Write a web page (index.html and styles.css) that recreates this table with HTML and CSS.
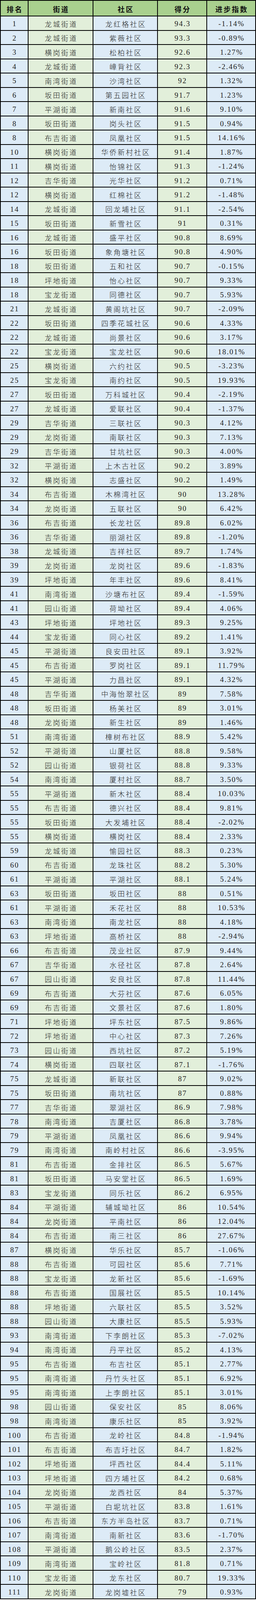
FILE: index.html
```html
<!DOCTYPE html>
<html lang="zh-CN">
<head>
<meta charset="utf-8">
<title>社区排名</title>
<link rel="stylesheet" href="styles.css">
</head>
<body>
<div class="table">
<div class="row head"><div class="c">排名</div><div class="c">街道</div><div class="c">社区</div><div class="c">得分</div><div class="c">进步指数</div></div>
<div class="row"><div class="c n b">1</div><div class="c t g">龙城街道</div><div class="c t b">龙红格社区</div><div class="c n g">94.3</div><div class="c n b">-1.14%</div></div>
<div class="row"><div class="c n b">2</div><div class="c t g">龙城街道</div><div class="c t b">紫薇社区</div><div class="c n g">93.3</div><div class="c n b">-0.89%</div></div>
<div class="row"><div class="c n b">3</div><div class="c t g">横岗街道</div><div class="c t b">松柏社区</div><div class="c n g">92.6</div><div class="c n b">1.27%</div></div>
<div class="row"><div class="c n b">4</div><div class="c t g">龙城街道</div><div class="c t b">嶂背社区</div><div class="c n g">92.3</div><div class="c n b">-2.46%</div></div>
<div class="row"><div class="c n b">5</div><div class="c t g">南湾街道</div><div class="c t b">沙湾社区</div><div class="c n g">92</div><div class="c n b">1.32%</div></div>
<div class="row"><div class="c n b">6</div><div class="c t g">坂田街道</div><div class="c t b">第五园社区</div><div class="c n g">91.7</div><div class="c n b">1.23%</div></div>
<div class="row"><div class="c n b">7</div><div class="c t g">平湖街道</div><div class="c t b">新南社区</div><div class="c n g">91.6</div><div class="c n b">9.10%</div></div>
<div class="row"><div class="c n b">8</div><div class="c t g">坂田街道</div><div class="c t b">岗头社区</div><div class="c n g">91.5</div><div class="c n b">0.94%</div></div>
<div class="row"><div class="c n b">8</div><div class="c t g">布吉街道</div><div class="c t b">凤凰社区</div><div class="c n g">91.5</div><div class="c n b">14.16%</div></div>
<div class="row"><div class="c n b">10</div><div class="c t g">横岗街道</div><div class="c t b">华侨新村社区</div><div class="c n g">91.4</div><div class="c n b">1.87%</div></div>
<div class="row"><div class="c n b">11</div><div class="c t g">横岗街道</div><div class="c t b">怡锦社区</div><div class="c n g">91.3</div><div class="c n b">-1.24%</div></div>
<div class="row"><div class="c n b">12</div><div class="c t g">吉华街道</div><div class="c t b">光华社区</div><div class="c n g">91.2</div><div class="c n b">0.71%</div></div>
<div class="row"><div class="c n b">12</div><div class="c t g">横岗街道</div><div class="c t b">红棉社区</div><div class="c n g">91.2</div><div class="c n b">-1.48%</div></div>
<div class="row"><div class="c n b">14</div><div class="c t g">龙城街道</div><div class="c t b">回龙埔社区</div><div class="c n g">91.1</div><div class="c n b">-2.54%</div></div>
<div class="row"><div class="c n b">15</div><div class="c t g">坂田街道</div><div class="c t b">新雪社区</div><div class="c n g">91</div><div class="c n b">0.31%</div></div>
<div class="row"><div class="c n b">16</div><div class="c t g">龙城街道</div><div class="c t b">盛平社区</div><div class="c n g">90.8</div><div class="c n b">8.69%</div></div>
<div class="row"><div class="c n b">16</div><div class="c t g">坂田街道</div><div class="c t b">象角塘社区</div><div class="c n g">90.8</div><div class="c n b">4.90%</div></div>
<div class="row"><div class="c n b">18</div><div class="c t g">坂田街道</div><div class="c t b">五和社区</div><div class="c n g">90.7</div><div class="c n b">-0.15%</div></div>
<div class="row"><div class="c n b">18</div><div class="c t g">坪地街道</div><div class="c t b">怡心社区</div><div class="c n g">90.7</div><div class="c n b">9.33%</div></div>
<div class="row"><div class="c n b">18</div><div class="c t g">宝龙街道</div><div class="c t b">同德社区</div><div class="c n g">90.7</div><div class="c n b">5.93%</div></div>
<div class="row"><div class="c n b">21</div><div class="c t g">龙城街道</div><div class="c t b">黄阁坑社区</div><div class="c n g">90.7</div><div class="c n b">-2.09%</div></div>
<div class="row"><div class="c n b">22</div><div class="c t g">坂田街道</div><div class="c t b">四季花城社区</div><div class="c n g">90.6</div><div class="c n b">4.33%</div></div>
<div class="row"><div class="c n b">22</div><div class="c t g">龙城街道</div><div class="c t b">尚景社区</div><div class="c n g">90.6</div><div class="c n b">3.17%</div></div>
<div class="row"><div class="c n b">22</div><div class="c t g">宝龙街道</div><div class="c t b">宝龙社区</div><div class="c n g">90.6</div><div class="c n b">18.01%</div></div>
<div class="row"><div class="c n b">25</div><div class="c t g">横岗街道</div><div class="c t b">六约社区</div><div class="c n g">90.5</div><div class="c n b">-3.23%</div></div>
<div class="row"><div class="c n b">25</div><div class="c t g">宝龙街道</div><div class="c t b">南约社区</div><div class="c n g">90.5</div><div class="c n b">19.93%</div></div>
<div class="row"><div class="c n b">27</div><div class="c t g">坂田街道</div><div class="c t b">万科城社区</div><div class="c n g">90.4</div><div class="c n b">-2.19%</div></div>
<div class="row"><div class="c n b">27</div><div class="c t g">龙城街道</div><div class="c t b">爱联社区</div><div class="c n g">90.4</div><div class="c n b">-1.37%</div></div>
<div class="row"><div class="c n b">29</div><div class="c t g">吉华街道</div><div class="c t b">三联社区</div><div class="c n g">90.3</div><div class="c n b">4.12%</div></div>
<div class="row"><div class="c n b">29</div><div class="c t g">龙岗街道</div><div class="c t b">南联社区</div><div class="c n g">90.3</div><div class="c n b">7.13%</div></div>
<div class="row"><div class="c n b">29</div><div class="c t g">吉华街道</div><div class="c t b">甘坑社区</div><div class="c n g">90.3</div><div class="c n b">4.00%</div></div>
<div class="row"><div class="c n b">32</div><div class="c t g">平湖街道</div><div class="c t b">上木古社区</div><div class="c n g">90.2</div><div class="c n b">3.89%</div></div>
<div class="row"><div class="c n b">32</div><div class="c t g">横岗街道</div><div class="c t b">志盛社区</div><div class="c n g">90.2</div><div class="c n b">1.49%</div></div>
<div class="row"><div class="c n b">34</div><div class="c t g">布吉街道</div><div class="c t b">木棉湾社区</div><div class="c n g">90</div><div class="c n b">13.28%</div></div>
<div class="row"><div class="c n b">34</div><div class="c t g">龙岗街道</div><div class="c t b">五联社区</div><div class="c n g">90</div><div class="c n b">6.42%</div></div>
<div class="row"><div class="c n b">36</div><div class="c t g">布吉街道</div><div class="c t b">长龙社区</div><div class="c n g">89.8</div><div class="c n b">6.02%</div></div>
<div class="row"><div class="c n b">36</div><div class="c t g">吉华街道</div><div class="c t b">丽湖社区</div><div class="c n g">89.8</div><div class="c n b">-1.20%</div></div>
<div class="row"><div class="c n b">38</div><div class="c t g">龙城街道</div><div class="c t b">吉祥社区</div><div class="c n g">89.7</div><div class="c n b">1.74%</div></div>
<div class="row"><div class="c n b">39</div><div class="c t g">龙岗街道</div><div class="c t b">龙岗社区</div><div class="c n g">89.6</div><div class="c n b">-1.83%</div></div>
<div class="row"><div class="c n b">39</div><div class="c t g">坪地街道</div><div class="c t b">年丰社区</div><div class="c n g">89.6</div><div class="c n b">8.41%</div></div>
<div class="row"><div class="c n b">41</div><div class="c t g">南湾街道</div><div class="c t b">沙塘布社区</div><div class="c n g">89.4</div><div class="c n b">-1.59%</div></div>
<div class="row"><div class="c n b">41</div><div class="c t g">园山街道</div><div class="c t b">荷坳社区</div><div class="c n g">89.4</div><div class="c n b">4.06%</div></div>
<div class="row"><div class="c n b">43</div><div class="c t g">坪地街道</div><div class="c t b">坪地社区</div><div class="c n g">89.3</div><div class="c n b">9.25%</div></div>
<div class="row"><div class="c n b">44</div><div class="c t g">宝龙街道</div><div class="c t b">同心社区</div><div class="c n g">89.2</div><div class="c n b">1.41%</div></div>
<div class="row"><div class="c n b">45</div><div class="c t g">平湖街道</div><div class="c t b">良安田社区</div><div class="c n g">89.1</div><div class="c n b">3.92%</div></div>
<div class="row"><div class="c n b">45</div><div class="c t g">布吉街道</div><div class="c t b">罗岗社区</div><div class="c n g">89.1</div><div class="c n b">11.79%</div></div>
<div class="row"><div class="c n b">45</div><div class="c t g">平湖街道</div><div class="c t b">力昌社区</div><div class="c n g">89.1</div><div class="c n b">4.32%</div></div>
<div class="row"><div class="c n b">48</div><div class="c t g">吉华街道</div><div class="c t b">中海怡翠社区</div><div class="c n g">89</div><div class="c n b">7.58%</div></div>
<div class="row"><div class="c n b">48</div><div class="c t g">坂田街道</div><div class="c t b">杨美社区</div><div class="c n g">89</div><div class="c n b">3.01%</div></div>
<div class="row"><div class="c n b">48</div><div class="c t g">龙岗街道</div><div class="c t b">新生社区</div><div class="c n g">89</div><div class="c n b">1.46%</div></div>
<div class="row"><div class="c n b">51</div><div class="c t g">南湾街道</div><div class="c t b">樟树布社区</div><div class="c n g">88.9</div><div class="c n b">5.42%</div></div>
<div class="row"><div class="c n b">52</div><div class="c t g">平湖街道</div><div class="c t b">山厦社区</div><div class="c n g">88.8</div><div class="c n b">9.58%</div></div>
<div class="row"><div class="c n b">52</div><div class="c t g">园山街道</div><div class="c t b">银荷社区</div><div class="c n g">88.8</div><div class="c n b">9.33%</div></div>
<div class="row"><div class="c n b">54</div><div class="c t g">南湾街道</div><div class="c t b">厦村社区</div><div class="c n g">88.7</div><div class="c n b">3.50%</div></div>
<div class="row"><div class="c n b">55</div><div class="c t g">平湖街道</div><div class="c t b">新木社区</div><div class="c n g">88.4</div><div class="c n b">10.03%</div></div>
<div class="row"><div class="c n b">55</div><div class="c t g">布吉街道</div><div class="c t b">德兴社区</div><div class="c n g">88.4</div><div class="c n b">9.81%</div></div>
<div class="row"><div class="c n b">55</div><div class="c t g">坂田街道</div><div class="c t b">大发埔社区</div><div class="c n g">88.4</div><div class="c n b">-2.02%</div></div>
<div class="row"><div class="c n b">55</div><div class="c t g">横岗街道</div><div class="c t b">横岗社区</div><div class="c n g">88.4</div><div class="c n b">2.33%</div></div>
<div class="row"><div class="c n b">59</div><div class="c t g">龙城街道</div><div class="c t b">愉园社区</div><div class="c n g">88.3</div><div class="c n b">0.23%</div></div>
<div class="row"><div class="c n b">60</div><div class="c t g">布吉街道</div><div class="c t b">龙珠社区</div><div class="c n g">88.2</div><div class="c n b">5.30%</div></div>
<div class="row"><div class="c n b">61</div><div class="c t g">平湖街道</div><div class="c t b">平湖社区</div><div class="c n g">88.1</div><div class="c n b">5.24%</div></div>
<div class="row"><div class="c n b">63</div><div class="c t g">坂田街道</div><div class="c t b">坂田社区</div><div class="c n g">88</div><div class="c n b">0.51%</div></div>
<div class="row"><div class="c n b">61</div><div class="c t g">平湖街道</div><div class="c t b">禾花社区</div><div class="c n g">88</div><div class="c n b">10.53%</div></div>
<div class="row"><div class="c n b">63</div><div class="c t g">南湾街道</div><div class="c t b">南龙社区</div><div class="c n g">88</div><div class="c n b">4.18%</div></div>
<div class="row"><div class="c n b">63</div><div class="c t g">坪地街道</div><div class="c t b">高桥社区</div><div class="c n g">88</div><div class="c n b">-2.94%</div></div>
<div class="row"><div class="c n b">66</div><div class="c t g">布吉街道</div><div class="c t b">茂业社区</div><div class="c n g">87.9</div><div class="c n b">9.44%</div></div>
<div class="row"><div class="c n b">67</div><div class="c t g">吉华街道</div><div class="c t b">水径社区</div><div class="c n g">87.8</div><div class="c n b">2.64%</div></div>
<div class="row"><div class="c n b">67</div><div class="c t g">园山街道</div><div class="c t b">安良社区</div><div class="c n g">87.8</div><div class="c n b">11.44%</div></div>
<div class="row"><div class="c n b">69</div><div class="c t g">布吉街道</div><div class="c t b">大芬社区</div><div class="c n g">87.6</div><div class="c n b">6.05%</div></div>
<div class="row"><div class="c n b">69</div><div class="c t g">布吉街道</div><div class="c t b">文景社区</div><div class="c n g">87.6</div><div class="c n b">1.80%</div></div>
<div class="row"><div class="c n b">71</div><div class="c t g">坪地街道</div><div class="c t b">坪东社区</div><div class="c n g">87.5</div><div class="c n b">9.86%</div></div>
<div class="row"><div class="c n b">72</div><div class="c t g">坪地街道</div><div class="c t b">中心社区</div><div class="c n g">87.3</div><div class="c n b">7.26%</div></div>
<div class="row"><div class="c n b">73</div><div class="c t g">园山街道</div><div class="c t b">西坑社区</div><div class="c n g">87.2</div><div class="c n b">5.19%</div></div>
<div class="row"><div class="c n b">74</div><div class="c t g">横岗街道</div><div class="c t b">四联社区</div><div class="c n g">87.1</div><div class="c n b">-1.76%</div></div>
<div class="row"><div class="c n b">75</div><div class="c t g">龙城街道</div><div class="c t b">新联社区</div><div class="c n g">87</div><div class="c n b">9.02%</div></div>
<div class="row"><div class="c n b">75</div><div class="c t g">坂田街道</div><div class="c t b">南坑社区</div><div class="c n g">87</div><div class="c n b">0.88%</div></div>
<div class="row"><div class="c n b">77</div><div class="c t g">吉华街道</div><div class="c t b">翠湖社区</div><div class="c n g">86.9</div><div class="c n b">7.98%</div></div>
<div class="row"><div class="c n b">78</div><div class="c t g">南湾街道</div><div class="c t b">吉厦社区</div><div class="c n g">86.8</div><div class="c n b">3.78%</div></div>
<div class="row"><div class="c n b">79</div><div class="c t g">平湖街道</div><div class="c t b">凤凰社区</div><div class="c n g">86.6</div><div class="c n b">9.94%</div></div>
<div class="row"><div class="c n b">79</div><div class="c t g">南湾街道</div><div class="c t b">南岭村社区</div><div class="c n g">86.6</div><div class="c n b">-3.95%</div></div>
<div class="row"><div class="c n b">81</div><div class="c t g">布吉街道</div><div class="c t b">金排社区</div><div class="c n g">86.5</div><div class="c n b">5.67%</div></div>
<div class="row"><div class="c n b">81</div><div class="c t g">坂田街道</div><div class="c t b">马安堂社区</div><div class="c n g">86.5</div><div class="c n b">1.69%</div></div>
<div class="row"><div class="c n b">83</div><div class="c t g">宝龙街道</div><div class="c t b">同乐社区</div><div class="c n g">86.2</div><div class="c n b">6.95%</div></div>
<div class="row"><div class="c n b">84</div><div class="c t g">平湖街道</div><div class="c t b">辅城坳社区</div><div class="c n g">86</div><div class="c n b">10.54%</div></div>
<div class="row"><div class="c n b">84</div><div class="c t g">龙岗街道</div><div class="c t b">平南社区</div><div class="c n g">86</div><div class="c n b">12.04%</div></div>
<div class="row"><div class="c n b">84</div><div class="c t g">布吉街道</div><div class="c t b">南三社区</div><div class="c n g">86</div><div class="c n b">27.67%</div></div>
<div class="row"><div class="c n b">87</div><div class="c t g">横岗街道</div><div class="c t b">华乐社区</div><div class="c n g">85.7</div><div class="c n b">-1.06%</div></div>
<div class="row"><div class="c n b">88</div><div class="c t g">布吉街道</div><div class="c t b">可园社区</div><div class="c n g">85.6</div><div class="c n b">7.71%</div></div>
<div class="row"><div class="c n b">88</div><div class="c t g">宝龙街道</div><div class="c t b">龙新社区</div><div class="c n g">85.6</div><div class="c n b">-1.69%</div></div>
<div class="row"><div class="c n b">88</div><div class="c t g">布吉街道</div><div class="c t b">国展社区</div><div class="c n g">85.5</div><div class="c n b">10.14%</div></div>
<div class="row"><div class="c n b">88</div><div class="c t g">坪地街道</div><div class="c t b">六联社区</div><div class="c n g">85.5</div><div class="c n b">3.52%</div></div>
<div class="row"><div class="c n b">88</div><div class="c t g">园山街道</div><div class="c t b">大康社区</div><div class="c n g">85.5</div><div class="c n b">5.93%</div></div>
<div class="row"><div class="c n b">93</div><div class="c t g">南湾街道</div><div class="c t b">下李朗社区</div><div class="c n g">85.3</div><div class="c n b">-7.02%</div></div>
<div class="row"><div class="c n b">94</div><div class="c t g">南湾街道</div><div class="c t b">丹平社区</div><div class="c n g">85.2</div><div class="c n b">4.13%</div></div>
<div class="row"><div class="c n b">95</div><div class="c t g">布吉街道</div><div class="c t b">布吉社区</div><div class="c n g">85.1</div><div class="c n b">2.77%</div></div>
<div class="row"><div class="c n b">95</div><div class="c t g">南湾街道</div><div class="c t b">丹竹头社区</div><div class="c n g">85.1</div><div class="c n b">6.92%</div></div>
<div class="row"><div class="c n b">95</div><div class="c t g">南湾街道</div><div class="c t b">上李朗社区</div><div class="c n g">85.1</div><div class="c n b">3.01%</div></div>
<div class="row"><div class="c n b">98</div><div class="c t g">园山街道</div><div class="c t b">保安社区</div><div class="c n g">85</div><div class="c n b">8.06%</div></div>
<div class="row"><div class="c n b">98</div><div class="c t g">南湾街道</div><div class="c t b">康乐社区</div><div class="c n g">85</div><div class="c n b">3.92%</div></div>
<div class="row"><div class="c n b">100</div><div class="c t g">布吉街道</div><div class="c t b">龙岭社区</div><div class="c n g">84.8</div><div class="c n b">-1.94%</div></div>
<div class="row"><div class="c n b">101</div><div class="c t g">布吉街道</div><div class="c t b">布吉圩社区</div><div class="c n g">84.7</div><div class="c n b">1.82%</div></div>
<div class="row"><div class="c n b">102</div><div class="c t g">坪地街道</div><div class="c t b">坪西社区</div><div class="c n g">84.4</div><div class="c n b">5.11%</div></div>
<div class="row"><div class="c n b">103</div><div class="c t g">坪地街道</div><div class="c t b">四方埔社区</div><div class="c n g">84.2</div><div class="c n b">0.68%</div></div>
<div class="row"><div class="c n b">104</div><div class="c t g">龙岗街道</div><div class="c t b">龙西社区</div><div class="c n g">84</div><div class="c n b">5.37%</div></div>
<div class="row"><div class="c n b">105</div><div class="c t g">平湖街道</div><div class="c t b">白坭坑社区</div><div class="c n g">83.8</div><div class="c n b">1.61%</div></div>
<div class="row"><div class="c n b">106</div><div class="c t g">布吉街道</div><div class="c t b">东方半岛社区</div><div class="c n g">83.7</div><div class="c n b">0.71%</div></div>
<div class="row"><div class="c n b">107</div><div class="c t g">南湾街道</div><div class="c t b">南新社区</div><div class="c n g">83.6</div><div class="c n b">-1.70%</div></div>
<div class="row"><div class="c n b">108</div><div class="c t g">平湖街道</div><div class="c t b">鹅公岭社区</div><div class="c n g">83.5</div><div class="c n b">2.37%</div></div>
<div class="row"><div class="c n b">109</div><div class="c t g">南湾街道</div><div class="c t b">宝岭社区</div><div class="c n g">81.8</div><div class="c n b">0.71%</div></div>
<div class="row"><div class="c n b">110</div><div class="c t g">宝龙街道</div><div class="c t b">龙东社区</div><div class="c n g">80.7</div><div class="c n b">19.33%</div></div>
<div class="row"><div class="c n b">111</div><div class="c t g">龙岗街道</div><div class="c t b">龙岗墟社区</div><div class="c n g">79</div><div class="c n b">0.93%</div></div>
</div>
</body>
</html>
```
FILE: styles.css
```css
html, body {
  margin: 0;
  padding: 0;
  background: #ffffff;
}

.table {
  display: flex;
  flex-direction: column;
  width: 655px;
}

/* Row heights follow the window height: 46 of 5162 per row, 53 for the header */
.row {
  display: grid;
  grid-template-columns: 73px 166px 165px 126px 125px;
  flex: 0 0 auto;
  height: calc(100vh * 46 / 5162);
}

.row.head {
  height: calc(100vh * 53 / 5162);
}

.c {
  box-sizing: border-box;
  display: flex;
  align-items: center;
  justify-content: center;
  border-right: 2px solid #000;
  border-bottom: 2px solid #000;
  padding-top: 3px;
  overflow: hidden;
  line-height: 1;
  color: #222;
  white-space: nowrap;
}

.c:first-child {
  border-left: 2px solid #000;
}

.head .c {
  border-top: 2px solid #000;
  background: #a9d08e;
  font-family: "Noto Sans CJK SC", "Noto Sans CJK JP", sans-serif;
  font-weight: 700;
  font-size: 18px;
  letter-spacing: 3px;
  padding-left: 3px;
  color: #111;
}

.b {
  background: #ddebf7;
}

.g {
  background: #e2efda;
}

.t {
  font-family: "Noto Sans CJK SC", "Noto Sans CJK JP", sans-serif;
  font-weight: 300;
  font-size: 18px;
  letter-spacing: 3px;
  padding-left: 3px;
}

.n {
  font-family: "Liberation Serif", "Times New Roman", serif;
  font-size: 19px;
  letter-spacing: 2px;
  padding-left: 2px;
}
```
